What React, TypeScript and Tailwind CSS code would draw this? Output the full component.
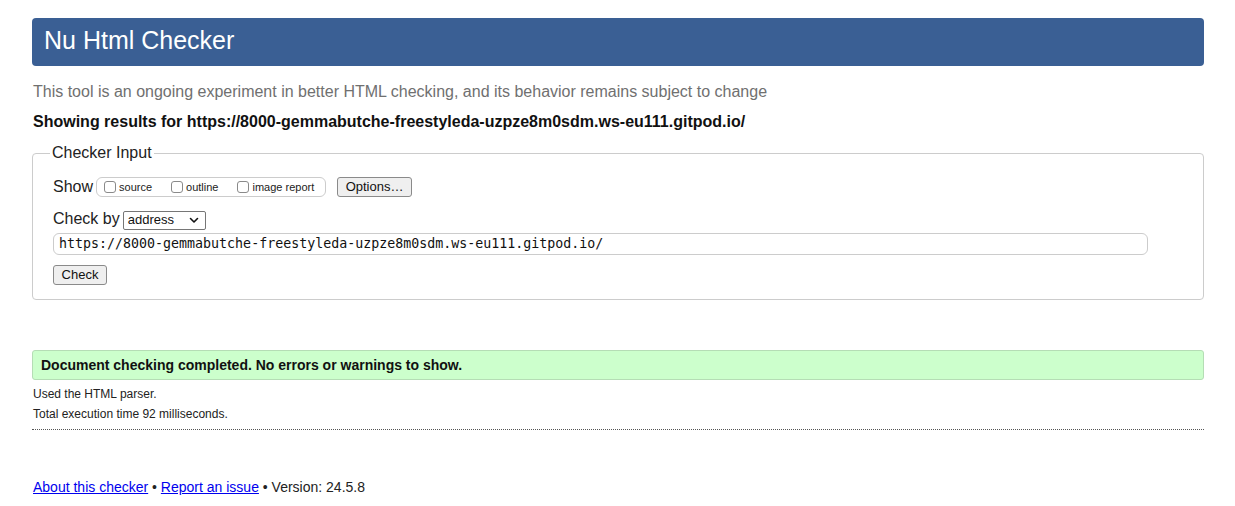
import React from "react";

const sans = { fontFamily: '"Liberation Sans", Arial, Helvetica, sans-serif' };

function Box({ label }: { label: string }) {
  return (
    <span className="inline-flex items-center">
      <span className="inline-block w-[12px] h-[12px] rounded-[3px] border border-[#8a8a8a] bg-white" />
      <span className="ml-[3px] text-[11px] text-[#222]">{label}</span>
    </span>
  );
}

export default function App() {
  return (
    <div className="min-h-[506px] bg-white text-[#111]" style={sans}>
      <div className="ml-[32px] mr-[31px] pt-[18px] pb-[10px]">
        <div className="h-[48px] rounded-[4px] bg-[#3a5f94] px-[12px] pt-[7px]">
          <h1 className="text-[25px] leading-[30px] text-white font-normal">Nu Html Checker</h1>
        </div>

        <p className="mt-[16px] pl-[1px] text-[16px] leading-[20px] text-[#707070]">
          This tool is an ongoing experiment in better HTML checking, and its behavior remains subject to change
        </p>
        <p className="mt-[10px] pl-[1px] text-[16px] leading-[20px] font-bold text-[#111]">
          Showing results for https://8000-gemmabutche-freestyleda-uzpze8m0sdm.ws-eu111.gitpod.io/
        </p>

        <fieldset className="mt-[11px] border border-[#cccccc] rounded-[4px] px-[20px] pb-[14px]">
          <legend className="-ml-[3px] px-[2px] text-[16px] leading-[20px] text-[#222]">Checker Input</legend>

          <div className="mt-[13px] h-[22px] flex items-center">
            <span className="text-[16px] text-[#222]">Show</span>
            <div className="ml-[3px] h-[20px] w-[230px] rounded-[6px] border border-[#cccccc] flex items-center pl-[7px] gap-[19px]">
              <Box label="source" />
              <Box label="outline" />
              <Box label="image report" />
            </div>
            <button className="ml-[11px] h-[20px] w-[75px] rounded-[3px] border border-[#8a8a8a] bg-[#efefef] text-[13px] leading-[18px] text-[#111]">
              Options…
            </button>
          </div>

          <div className="mt-[10px] h-[22px] flex items-center">
            <span className="text-[16px] text-[#222]">Check by</span>
            <div className="ml-[3px] mt-[2px] h-[19px] w-[83px] rounded-[2px] border border-[#767676] bg-white flex items-center justify-between pl-[4px] pr-[6px]">
              <span className="text-[13px] leading-[16px] text-[#111]">address</span>
              <svg width="10" height="7" viewBox="0 0 10 7">
                <path d="M1.5 1.5 L5 5 L8.5 1.5" fill="none" stroke="#111" strokeWidth="1.6" strokeLinecap="round" strokeLinejoin="round" />
              </svg>
            </div>
          </div>

          <div
            className="mt-[3px] h-[22px] w-[1095px] rounded-[6px] border border-[#cccccc] flex items-center pl-[5px] text-[13.3px] text-[#111]"
            style={{ fontFamily: '"DejaVu Sans Mono", "Liberation Mono", monospace' }}
          >
            https://8000-gemmabutche-freestyleda-uzpze8m0sdm.ws-eu111.gitpod.io/
          </div>

          <button className="mt-[10px] h-[20px] w-[54px] rounded-[3px] border border-[#8a8a8a] bg-[#efefef] text-[13px] leading-[18px] text-[#111] block">
            Check
          </button>
        </fieldset>

        <div className="mt-[50px] h-[30px] rounded-[3px] border border-[#b5ddb5] bg-[#ccffcc] flex items-center pl-[8px]">
          <span className="text-[14px] font-bold text-[#111]">Document checking completed. No errors or warnings to show.</span>
        </div>

        <div className="border-b border-dotted border-[#555] pb-[8px]">
          <p className="mt-[7px] pl-[1px] text-[12px] leading-[14px] text-[#222]">Used the HTML parser.</p>
          <p className="mt-[6px] pl-[1px] text-[12px] leading-[14px] text-[#222]">Total execution time 92 milliseconds.</p>
        </div>

        <p className="mt-[49px] pl-[1px] text-[14px] leading-[16px] text-[#222]">
          <a className="text-[#0000ee] underline" href="#">About this checker</a>
          {" • "}
          <a className="text-[#0000ee] underline" href="#">Report an issue</a>
          {" • Version: 24.5.8"}
        </p>
      </div>
    </div>
  );
}
